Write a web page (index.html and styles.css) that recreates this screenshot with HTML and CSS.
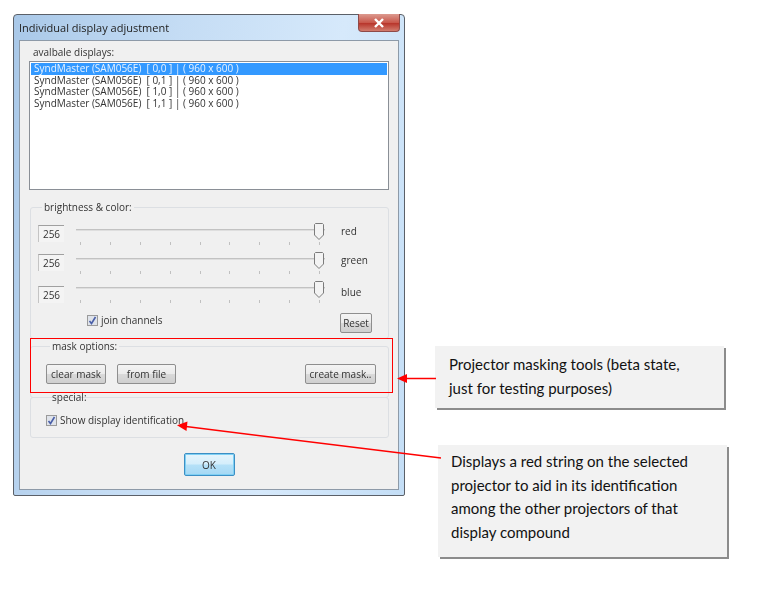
FILE: index.html
```html
<!DOCTYPE html>
<html lang="en">
<head>
    <meta charset="UTF-8">
    <title>Individual display adjustment</title>
    <link rel="stylesheet" href="styles.css">
</head>
<body>
    <div class="page">
        <div class="window">
            <div class="titlebar">
                <span class="title">Individual display adjustment</span>
                <span class="close">
                    <svg width="12" height="10" viewBox="0 0 12 10"><path d="M2 1 L10 9 M10 1 L2 9" stroke="#fff" stroke-width="2.4" fill="none"/></svg>
                </span>
            </div>
            <div class="client">
                <div class="list-label">avalbale displays:</div>
                <div class="listbox">
                    <div class="list-row selected">SyndMaster (SAM056E)  [ 0,0 ] | ( 960 x 600 )</div>
                    <div class="list-row">SyndMaster (SAM056E)  [ 0,1 ] | ( 960 x 600 )</div>
                    <div class="list-row">SyndMaster (SAM056E)  [ 1,0 ] | ( 960 x 600 )</div>
                    <div class="list-row">SyndMaster (SAM056E)  [ 1,1 ] | ( 960 x 600 )</div>
                </div>

                <fieldset class="group group-color">
                    <legend>brightness &amp; color:</legend>
                    <div class="slider-row">
                        <span class="value">256</span>
                        <div class="slider">
                            <div class="track"></div>
                            <svg class="thumb" width="10" height="17" viewBox="0 0 10 17"><path d="M1.5 .5 H8.5 L9.5 1.5 V12 L5 16.5 L.5 12 V1.5 Z" fill="#f3f3f3" stroke="#7b7b7b"/></svg>
                            <div class="ticks"><i></i><i></i><i></i><i></i><i></i><i></i><i></i><i></i><i></i></div>
                        </div>
                        <span class="channel">red</span>
                    </div>
                    <div class="slider-row">
                        <span class="value">256</span>
                        <div class="slider">
                            <div class="track"></div>
                            <svg class="thumb" width="10" height="17" viewBox="0 0 10 17"><path d="M1.5 .5 H8.5 L9.5 1.5 V12 L5 16.5 L.5 12 V1.5 Z" fill="#f3f3f3" stroke="#7b7b7b"/></svg>
                            <div class="ticks"><i></i><i></i><i></i><i></i><i></i><i></i><i></i><i></i><i></i></div>
                        </div>
                        <span class="channel">green</span>
                    </div>
                    <div class="slider-row row-blue">
                        <span class="value">256</span>
                        <div class="slider">
                            <div class="track"></div>
                            <svg class="thumb" width="10" height="17" viewBox="0 0 10 17"><path d="M1.5 .5 H8.5 L9.5 1.5 V12 L5 16.5 L.5 12 V1.5 Z" fill="#f3f3f3" stroke="#7b7b7b"/></svg>
                            <div class="ticks"><i></i><i></i><i></i><i></i><i></i><i></i><i></i><i></i><i></i></div>
                        </div>
                        <span class="channel">blue</span>
                    </div>
                    <div class="join-row">
                        <span class="check">
                            <svg width="9" height="9" viewBox="0 0 9 9"><path d="M1.5 5 L3.5 7.5 L7.5 1" stroke="#4a5fa8" stroke-width="1.6" fill="none"/></svg>
                        </span>
                        <span class="check-label">join channels</span>
                        <button class="btn btn-reset">Reset</button>
                    </div>
                </fieldset>

                <fieldset class="group group-mask">
                    <legend>mask options:</legend>
                    <div class="mask-row">
                        <button class="btn btn-clear">clear mask</button>
                        <button class="btn btn-file">from file</button>
                        <button class="btn btn-create">create mask..</button>
                    </div>
                </fieldset>

                <fieldset class="group group-special">
                    <legend>special:</legend>
                    <div class="special-row">
                        <span class="check">
                            <svg width="9" height="9" viewBox="0 0 9 9"><path d="M1.5 5 L3.5 7.5 L7.5 1" stroke="#4a5fa8" stroke-width="1.6" fill="none"/></svg>
                        </span>
                        <span class="check-label">Show display identification</span>
                    </div>
                </fieldset>

                <div class="actions">
                    <button class="btn btn-ok">OK</button>
                </div>
            </div>
        </div>

        <!-- annotations on top of the screenshot -->
        <div class="mask-frame"></div>
        <div class="callout callout-mask">Projector masking tools (beta state,<br>just for testing purposes)</div>
        <div class="callout callout-id">Displays a red string on the selected<br>projector to aid in its identification<br>among the other projectors of that<br>display compound</div>
        <svg class="arrows" width="759" height="606" viewBox="0 0 759 606">
            <path d="M405 378.5 H436" stroke="#f00" stroke-width="1.5" fill="none"/>
            <path d="M397 378.5 L407 374 V383 Z" fill="#f00"/>
            <path d="M186 426.5 L441 458" stroke="#f00" stroke-width="1.5" fill="none"/>
            <path d="M177 425.3 L187.5 421.5 L186.5 431 Z" fill="#f00"/>
        </svg>
    </div>
</body>
</html>
```

FILE: styles.css
```css
* {
    box-sizing: border-box;
}

body {
    margin: 0;
    background: #fff;
    font-family: "Open Sans", "Noto Sans", sans-serif;
}

.page {
    position: relative;
    width: 759px;
    height: 606px;
    overflow: hidden;
    padding: 14px 0 0 13px;
}

/* dialog window */
.window {
    width: 392px;
    height: 482px;
    padding: 0 5px 5px;
    border: 1px solid #5b6068;
    border-radius: 4px 4px 2px 2px;
    background: linear-gradient(100deg, #a9c8e8 0%, #c4dcf4 35%, #d6e9fb 70%, #c4def6 100%);
    filter: blur(.35px);
}

.titlebar {
    display: flex;
    justify-content: space-between;
    height: 25px;
}

.title {
    font-size: 11px;
    line-height: 25px;
    color: #222;
}

.close {
    display: flex;
    align-items: center;
    justify-content: center;
    width: 42px;
    height: 18px;
    margin-top: -1px;
    margin-right: -1px;
    border: 1px solid #8f4a48;
    border-top: none;
    border-radius: 0 0 4px 4px;
    background: linear-gradient(#dc9a8f, #c9584c 50%, #b8362c 55%, #d27c6e);
}

.client {
    height: 450px;
    padding: 0 9px;
    border: 1px solid #8d9aa8;
    background: #f0f0f0;
    color: #333;
    font-size: 10px;
}

.list-label {
    height: 20px;
    padding: 4px 0 0 4px;
    line-height: 14px;
}

.listbox {
    height: 129px;
    padding: 1px;
    border: 1px solid #8a8f96;
    background: #fff;
}

.list-row {
    height: 11.3px;
    padding-left: 3px;
    font-size: 10px;
    line-height: 11.3px;
    white-space: pre;
}

.list-row.selected {
    height: 12px;
    background: #3399ff;
    color: #e8f3ff;
}

/* group boxes */
.group {
    margin: -8px 0 0 1px;
    width: 359px;
    min-width: 0;
    border: 1px solid #dcdfe3;
    border-radius: 3px;
}

.group legend {
    padding: 0 2px;
    margin-left: 4px;
    font-size: 10px;
    line-height: 14px;
}

.group-color {
    margin-top: 10px;
    height: 139px;
    padding: 11px 16px 0 7px;
}

.group-mask {
    margin-top: 0;
    height: 59px;
    padding: 11px 12px 0 15px;
}

.group-special {
    height: 48px;
    padding: 11px 0 0 15px;
}

.slider-row {
    display: flex;
    align-items: flex-start;
    height: 17px;
    margin-bottom: 12px;
}

.row-blue {
    margin-top: 15px;
}

.value {
    width: 26px;
    height: 17px;
    border-top: 1px solid #a0a0a0;
    border-left: 1px solid #c4c4c4;
    background: #f4f4f4;
    text-align: center;
    line-height: 16px;
}

.slider {
    position: relative;
    width: 249px;
    height: 22px;
    margin: -2px 16px 0 12px;
}

.row-blue .slider {
    margin-top: -5px;
}

.track {
    height: 2px;
    margin-top: 6px;
    background: #c2c2c2;
    border-bottom: 1px solid #dedede;
}

.thumb {
    position: absolute;
    top: 0;
    right: 1px;
}

.ticks {
    display: flex;
    justify-content: space-between;
    margin: 11px 5px 0 4px;
}

.ticks i {
    width: 1px;
    height: 3px;
    background: #c0c0c0;
}

.channel {
    line-height: 12px;
}

.join-row {
    display: flex;
    align-items: flex-start;
    height: 20px;
    margin-top: -2px;
    padding: 2px 0 0 49px;
}

.special-row {
    display: flex;
}

.check {
    display: flex;
    align-items: center;
    justify-content: center;
    width: 11px;
    height: 11px;
    border: 1px solid #9a9a9a;
    background: #dfe3ea;
}

.check-label {
    margin-left: 3px;
    line-height: 11px;
}

/* buttons */
.btn {
    height: 20px;
    padding: 0;
    border: 1px solid #8e8e8e;
    border-radius: 2px;
    background: linear-gradient(#f4f4f4, #ebebeb 48%, #d9d9d9 52%, #cfcfcf);
    color: #333;
    font-family: inherit;
    font-size: 10px;
}

.btn-reset {
    width: 32px;
    margin: -2px 0 0 auto;
}

.mask-row {
    display: flex;
    gap: 11px;
}

.btn-clear {
    width: 60px;
}

.btn-file {
    width: 59px;
}

.btn-create {
    width: 71px;
    margin-left: auto;
}

.actions {
    display: flex;
    justify-content: center;
    margin-top: 15px;
}

.btn-ok {
    width: 51px;
    height: 23px;
    border: 1px solid #3c8fc4;
    background: linear-gradient(#e6f5fc, #d4eefb 48%, #b5e1f8 52%, #a5d8f4);
    box-shadow: inset 0 0 0 1px #7fd0f4;
}

/* annotations */
.mask-frame {
    position: absolute;
    top: 338px;
    left: 30px;
    width: 363px;
    height: 55px;
    border: 1px solid #f00;
}

.callout {
    position: absolute;
    background: #f2f2f2;
    box-shadow: 2px 2px 0 #8c8c8c;
    color: #111;
    font-family: Lato, "Open Sans", sans-serif;
    font-size: 15px;
    line-height: 24px;
}

.callout-mask {
    top: 346px;
    left: 435px;
    width: 289px;
    height: 62px;
    padding: 6px 0 0 14px;
}

.callout-id {
    top: 445px;
    left: 438px;
    width: 289px;
    height: 112px;
    padding: 5px 0 0 13px;
    line-height: 23.7px;
}

.arrows {
    position: absolute;
    top: 0;
    left: 0;
}
```
